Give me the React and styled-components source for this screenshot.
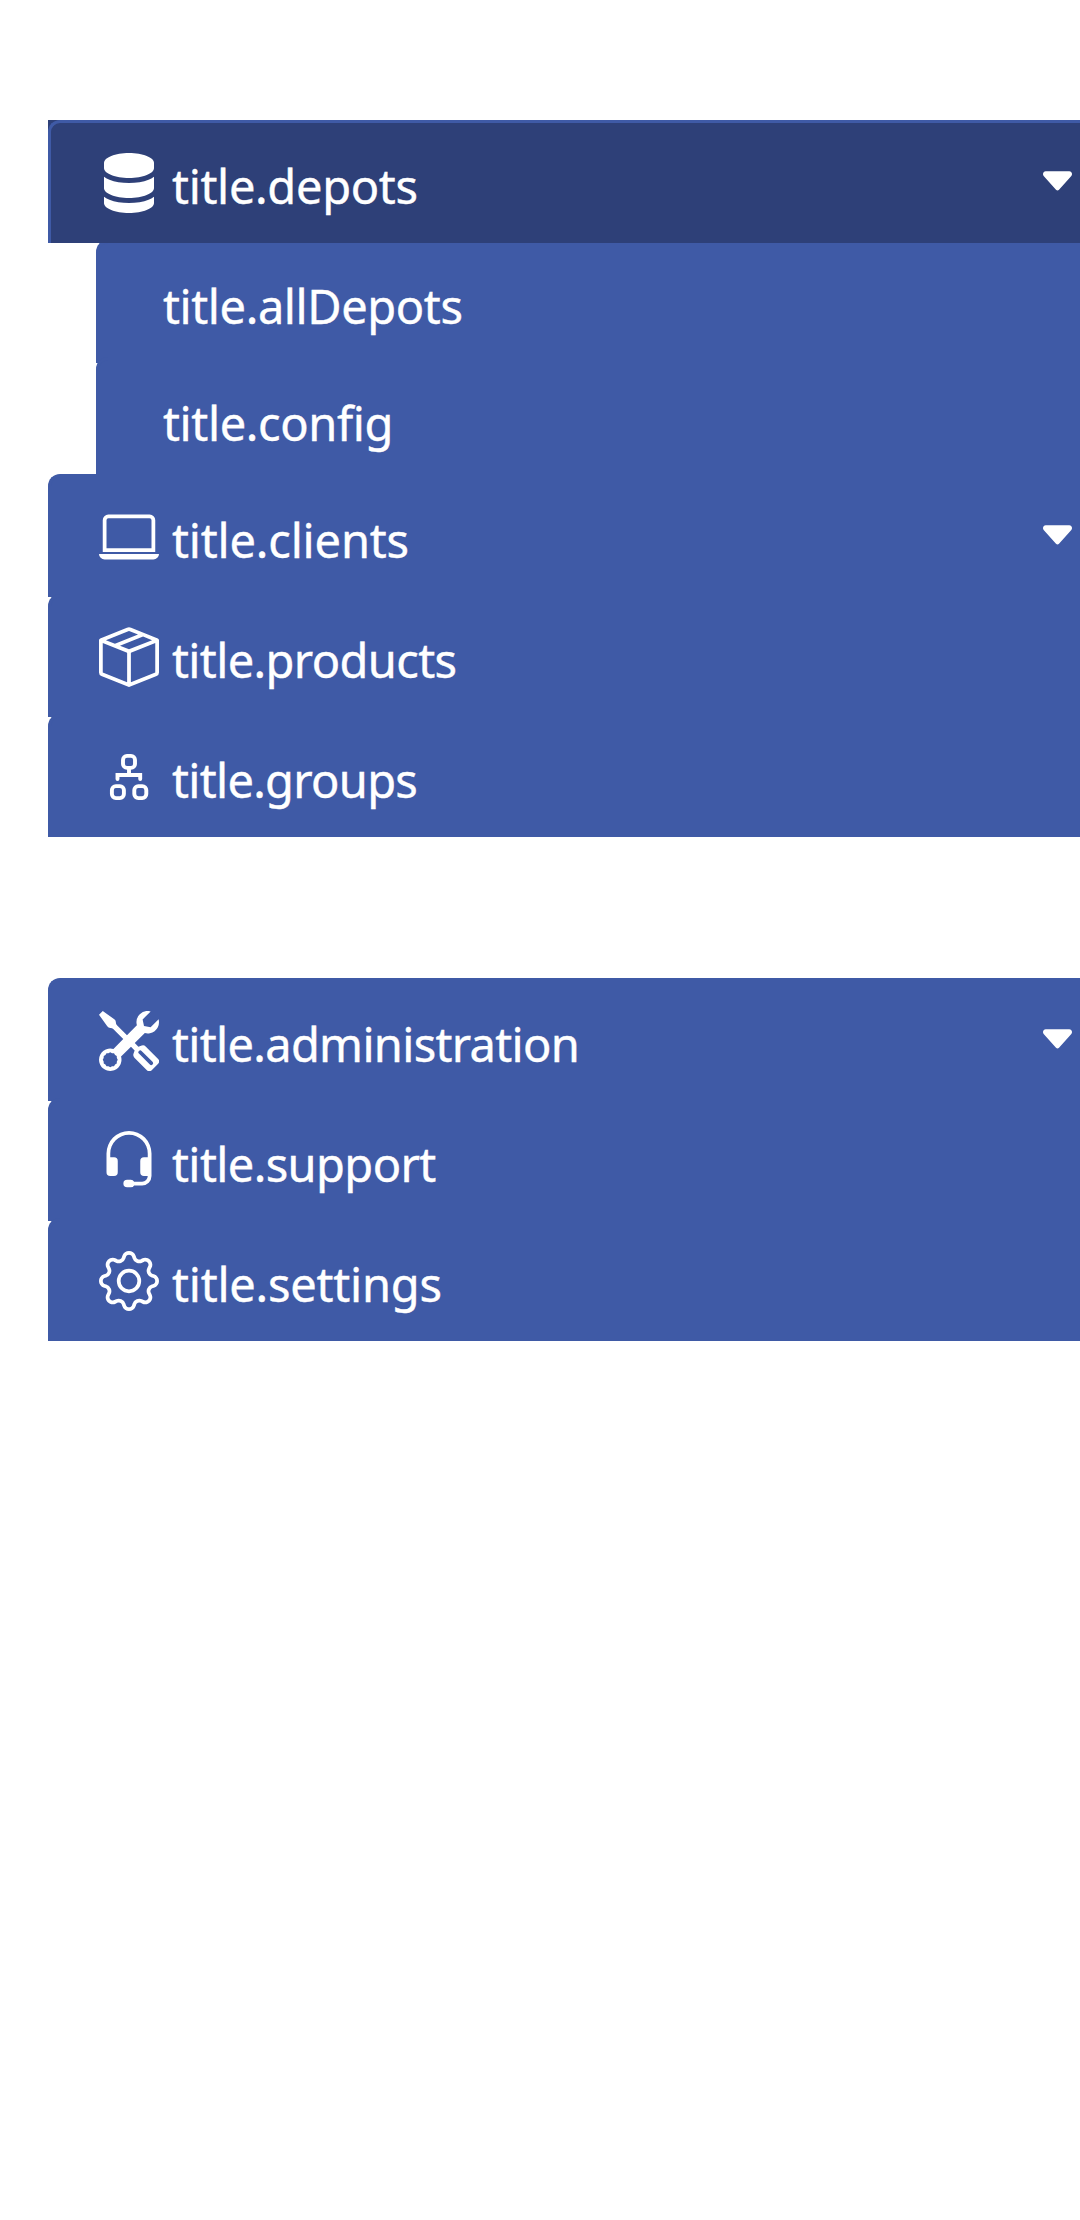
import React from "react";
import styled, { createGlobalStyle } from "styled-components";
import { BsServer, BsLaptop, BsBoxSeam, BsTools, BsHeadset, BsGear } from "react-icons/bs";

const BLUE = "#3f5aa6";
const NAVY = "#2e4078";

const GlobalStyle = createGlobalStyle`
  html, body {
    margin: 0;
    background: #fff;
    overflow: hidden;
  }
`;

const Sidebar = styled.nav`
  display: flex;
  flex-direction: column;
  gap: 141px;
  box-sizing: border-box;
  min-height: 2220px;
  padding: 120px 0 0 48px;
  font-family: "Noto Sans", "Open Sans", sans-serif;
  font-size: 47px;
  line-height: 60px;
  color: #fff;
`;

const Menu = styled.ul`
  display: flex;
  flex-direction: column;
  margin: 0;
  padding: 0;
  list-style: none;
`;

const MenuItem = styled.li`
  & + & {
    margin-top: -3px;
  }
`;

const Header = styled.div`
  position: relative;
  z-index: ${(p) => (p.$active ? 1 : "auto")};
  background: ${(p) => (p.$active ? NAVY : "transparent")};
`;

const Link = styled.a`
  display: flex;
  align-items: flex-start;
  box-sizing: border-box;
  height: 123px;
  padding: 30px 8px 0 48px;
  border: 3px solid ${BLUE};
  border-right: 0;
  border-bottom: 0;
  border-top-left-radius: 12px;
  background: ${(p) => (p.$active ? NAVY : BLUE)};
`;

const IconBox = styled.span`
  display: flex;
  flex: none;
  width: 60px;
  height: 60px;
  margin-right: 13px;

  svg {
    display: block;
    width: 60px;
    height: 60px;
  }
`;

const Label = styled.span`
  flex: 1;
  padding-top: 3px;
  white-space: nowrap;
  letter-spacing: ${(p) => p.$tracking}px;
  -webkit-text-stroke: 0.4px currentColor;
`;

const CaretIcon = styled.svg`
  flex: none;
  width: 29px;
  height: 20px;
  margin-top: 18px;
`;

const SubMenu = styled.ul`
  display: flex;
  flex-direction: column;
  margin: -3px 0 -3px 48px;
  padding: 0;
  list-style: none;
`;

const SubItem = styled.li`
  & + & {
    margin-top: -6px;
  }
`;

const SubLink = styled(Link)`
  padding-left: 64px;
`;

function Caret() {
  return (
    <CaretIcon viewBox="0 0 29 20" fill="currentColor">
      <path d="M2.8 .3H26.2Q29 .6 29 3.2Q29 4.2 28.1 5.2L16 18.8Q14.5 20.4 13 18.8L.9 5.2Q0 4.2 0 3.2Q0 .6 2.8 .3Z" />
    </CaretIcon>
  );
}

function SitemapIcon() {
  return (
    <svg viewBox="0 0 60 60" fill="none" stroke="currentColor" strokeWidth="3.9" strokeLinecap="round">
      <rect x="24" y="8.9" width="12" height="12" rx="4" />
      <rect x="12.9" y="39.1" width="12" height="12" rx="4" />
      <rect x="35.3" y="39.1" width="12" height="12" rx="4" />
      <path d="M30 21V28M18.5 32V28H41.2V32" />
    </svg>
  );
}

const menus = [
  [
    {
      label: "title.depots",
      tracking: -0.32,
      icon: BsServer,
      active: true,
      expandable: true,
      children: [
        { label: "title.allDepots", tracking: -0.4 },
        { label: "title.config", tracking: -0.38 },
      ],
    },
    { label: "title.clients", tracking: -0.17, icon: BsLaptop, expandable: true },
    { label: "title.products", tracking: -0.62, icon: BsBoxSeam },
    { label: "title.groups", tracking: -0.7, icon: SitemapIcon },
  ],
  [
    { label: "title.administration", tracking: -0.68, icon: BsTools, expandable: true },
    { label: "title.support", tracking: -0.6, icon: BsHeadset },
    { label: "title.settings", tracking: -0.22, icon: BsGear },
  ],
];

function Entry({ item }) {
  const Icon = item.icon;
  return (
    <MenuItem>
      <Header $active={item.active}>
        <Link $active={item.active}>
          <IconBox>
            <Icon />
          </IconBox>
          <Label $tracking={item.tracking}>{item.label}</Label>
          {item.expandable && <Caret />}
        </Link>
      </Header>
      {item.children && (
        <SubMenu>
          {item.children.map((child) => (
            <SubItem key={child.label}>
              <SubLink>
                <Label $tracking={child.tracking}>{child.label}</Label>
              </SubLink>
            </SubItem>
          ))}
        </SubMenu>
      )}
    </MenuItem>
  );
}

export default function App() {
  return (
    <>
      <GlobalStyle />
      <Sidebar>
        {menus.map((items) => (
          <Menu key={items[0].label}>
            {items.map((item) => (
              <Entry key={item.label} item={item} />
            ))}
          </Menu>
        ))}
      </Sidebar>
    </>
  );
}
